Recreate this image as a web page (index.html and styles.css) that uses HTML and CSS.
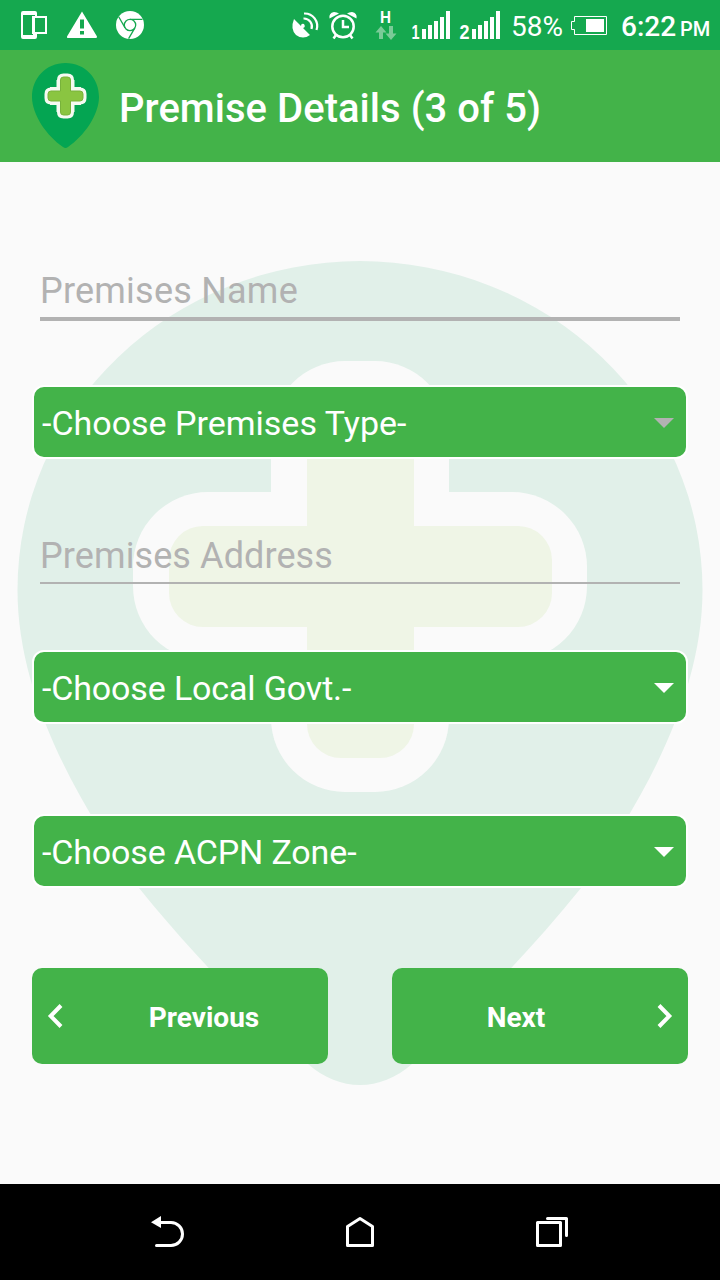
FILE: index.html
```html
<!DOCTYPE html>
<html lang="en">
<head>
<meta charset="utf-8">
<title>Premise Details</title>
<link rel="stylesheet" href="styles.css">
</head>
<body>
<div class="screen">
  <header class="status">
    <svg class="status-left" width="160" height="50" viewBox="0 0 160 50">
      <path fill="#fff" fill-rule="evenodd" d="M23 11H35Q37 11 37 13V16H47V34H37V37Q37 39 35 39H23Q21 39 21 37V13Q21 11 23 11ZM23 15V35H33V34H32V16H35V15ZM35 18V32H45V18Z"/>
      <path fill="#fff" fill-rule="evenodd" d="M82 11.500L97 36.500Q97 38 96 38H68Q66.500 38 67 36.500ZM80 19.500V28.500H84V19.500ZM80 31V34.500H84V31Z"/>
      <circle cx="130" cy="25" r="14" fill="#fff"/>
      <g fill="none" stroke="#15a84f" stroke-width="1.300">
        <circle cx="130" cy="25" r="5.700"/>
        <path d="M130 19.300H142.500M125.100 27.900L118.700 16.800M134.900 27.900L128.600 38.700"/>
      </g>
    </svg>
    <div class="status-right">
      <svg width="232" height="50" viewBox="280 0 232 50">
        <path fill="#fff" d="M294 19L301 26Q301 23 304 24Q306 27 303 28L310 35Q303 40 296 35Q290 29 294 19Z"/>
        <g fill="none" stroke="#fff" stroke-width="2.200">
          <path d="M304 13.500A12.500 12.500 0 0 1 316.500 30M303.500 18.500A8 8 0 0 1 311.500 29"/>
          <circle cx="343" cy="26.500" r="10.700" stroke-width="2.500"/>
          <path d="M343 20V27H349" stroke-width="2.500"/>
          <path d="M336 35L333.500 38.500M350 35L352.500 38.500" stroke-width="2.500"/>
        </g>
        <path fill="#fff" d="M329.500 18.500Q328.500 13 334 12Q337 12 339 13.500ZM356.500 18.500Q357.500 13 352 12Q349 12 347 13.500Z"/>
        <text class="net" x="380" y="23" textLength="11" lengthAdjust="spacingAndGlyphs">H</text>
        <path fill="#7acb98" d="M381 26L386.500 32.500H383V39H379V32.500H375.500ZM391 40L385.500 33.500H389V26H393V33.500H396.500Z"/>
        <text class="sim" x="411.500" y="39" textLength="8" lengthAdjust="spacingAndGlyphs">1</text>
        <text class="sim" x="459.500" y="39" textLength="10" lengthAdjust="spacingAndGlyphs">2</text>
        <path fill="#fff" d="M422 29h4v10h-4zM428 25h4v14h-4zM434 21h4v18h-4zM440 17h4v22h-4zM446 11h4v28h-4zM472 29h4v10h-4zM478 25h4v14h-4zM484 21h4v18h-4zM490 17h4v22h-4zM496 11h4v28h-4z"/>
      </svg>
      <span class="battery-text">58%</span>
      <svg class="battery" width="37" height="20" viewBox="0 0 37 20">
        <path fill="none" stroke="#fff" d="M3.500 .5H35.500V18.500H3.500V13.500H.5V5.500H3.500Z"/>
        <path fill="#fff" d="M15 3H33V16H15Z"/>
      </svg>
      <span class="clock">6:22</span><span class="meridiem">PM</span>
    </div>
  </header>

  <div class="appbar">
    <svg class="logo" width="67" height="86" viewBox="0 0 67 86">
      <path fill="#04a552" d="M33.500 0C53 0 67 15 67 34C67 52 52 73 36 84Q33.500 86 31 84C15 73 0 52 0 34C0 15 14 0 33.500 0Z"/>
      <path fill="none" stroke="#f6faf2" stroke-width="18" stroke-linecap="square" stroke-linejoin="round" d="M33.500 26V40M27 33H40"/>
      <path fill="#8ac541" stroke="#f6faf2" stroke-width="7" stroke-linejoin="round" d="M31.500 14H35.500Q38.500 14 38.500 17V28H48Q51 28 51 31V35Q51 38 48 38H38.500V49Q38.500 52 35.500 52H31.500Q28.500 52 28.500 49V38H19Q16 38 16 35V31Q16 28 19 28H28.500V17Q28.500 14 31.500 14Z"/>
      <path fill="#8ac541" stroke="#78b33b" d="M31.500 14H35.500Q38.500 14 38.500 17V28H48Q51 28 51 31V35Q51 38 48 38H38.500V49Q38.500 52 35.500 52H31.500Q28.500 52 28.500 49V38H19Q16 38 16 35V31Q16 28 19 28H28.500V17Q28.500 14 31.500 14Z"/>
    </svg>
    <h1 class="title">Premise Details (3 of 5)</h1>
  </div>

  <main class="content">
    <svg class="watermark" width="720" height="1022" viewBox="0 162 720 1022">
      <path fill="#e1f0e9" d="M17.500 590A342.500 329 0 0 1 702.500 590C702.500 700 638 808 581 888C527 955 465 1018 412 1064C396 1078 378 1085 360 1085S324 1078 308 1064C255 1018 193 955 139 888C82 808 17.500 700 17.500 590Z"/>
      <g fill="#fafafa"><rect x="271" y="361" width="178" height="431" rx="74"/><rect x="133" y="492" width="454" height="169" rx="75"/></g>
      <path fill="#fafafa" d="M271 440H449V700H271Z"/>
      <g fill="#eff5e6"><rect x="307" y="397" width="107" height="361" rx="34"/><rect x="169" y="526" width="383" height="101" rx="34"/></g>
    </svg>
    <form class="form">
      <div class="field focused">Premises Name</div>
      <div class="select muted"><span>-Choose Premises Type-</span><i class="caret"></i></div>
      <div class="field">Premises Address</div>
      <div class="select local"><span>-Choose Local Govt.-</span><i class="caret"></i></div>
      <div class="select zone"><span>-Choose ACPN Zone-</span><i class="caret"></i></div>
      <div class="actions">
        <button type="button" class="btn">
          <svg width="16" height="24" viewBox="0 0 16 24"><path fill="none" stroke="#fff" stroke-width="4" d="M14 1.500L3.700 12L14 22.500"/></svg>
          <span>Previous</span>
        </button>
        <button type="button" class="btn">
          <span>Next</span>
          <svg width="16" height="24" viewBox="0 0 16 24"><path fill="none" stroke="#fff" stroke-width="4" d="M2 1.500L12.300 12L2 22.500"/></svg>
        </button>
      </div>
    </form>
  </main>

  <nav class="navbar">
    <svg width="34" height="32" viewBox="0 0 34 32"><path fill="#fff" d="M0 6.200L10 0V12Z"/><path fill="none" stroke="#fff" stroke-width="3" stroke-linecap="round" d="M8 6.500H20A11.500 11.500 0 0 1 20 29.500H5.500"/></svg>
    <svg class="home" width="28" height="32" viewBox="0 0 28 32"><path fill="none" stroke="#fff" stroke-width="3" stroke-linejoin="round" d="M1.500 10.500L14 2.500L26.500 10.500V29.500H1.500Z"/></svg>
    <svg width="32" height="32" viewBox="0 0 32 32"><g fill="none" stroke="#fff" stroke-width="3" stroke-linejoin="round" stroke-linecap="round"><path d="M1.500 6.500H24.500V29.500H1.500Z"/><path d="M11.500 2.500H30.500V19.500"/></g></svg>
  </nav>
</div>
</body>
</html>
```
FILE: styles.css
```css
* { box-sizing: border-box; }
body { margin: 0; font-family: Roboto, sans-serif; }
.screen { width: 720px; height: 1280px; display: flex; flex-direction: column; overflow: hidden; background: #fafafa; }
svg { display: block; flex: none; }

.status { height: 50px; display: flex; justify-content: space-between; background: #15a84f; color: #fff; }
.status-right { display: flex; align-items: center; width: 440px; white-space: nowrap; }
.net { font: 700 17px "Liberation Sans", sans-serif; fill: #fff; }
.sim { font: 700 20px "Liberation Sans", sans-serif; fill: #fff; }
.battery-text { width: 60px; margin-left: -1px; font-size: 28px; padding-top: 3px; }
.battery { margin-top: 1px; }
.clock { width: 59px; margin-left: 13px; padding-top: 3px; font-size: 28px; font-weight: 500; }
.meridiem { padding-top: 8px; font-size: 20px; font-weight: 500; }

.appbar { height: 112px; display: flex; align-items: center; gap: 20px; padding-left: 32px; background: #43b349; }
.title { margin: 4px 0 0; font-size: 40px; font-weight: 500; letter-spacing: .04px; color: #fff; white-space: nowrap; }

.content { position: relative; flex: 1; }
.watermark { position: absolute; top: 0; left: 0; }
.form { position: relative; display: flex; flex-direction: column; padding: 95px 32px 0; }
.field { height: 64px; margin: 0 8px; padding-top: 13px; border-bottom: 4px solid #b2b2b2; font-size: 36px; line-height: 42px; color: #b2b2b2; letter-spacing: .1px; }
.focused { letter-spacing: .22px; }
.field:not(.focused) { height: 62px; margin-top: 63px; border-bottom-width: 2px; }
.select { height: 74px; margin-top: 66px; padding: 2px 12px 0 8px; display: flex; align-items: center; justify-content: space-between; border: 2px solid #fff; border-radius: 12px; background: #43b349; color: #fff; font-size: 34px; line-height: 42px; }
.focused + .select { margin-top: 64px; }
.local, .zone { letter-spacing: -.14px; }
.zone { margin-top: 90px; }
.caret { width: 0; border: 10px solid transparent; border-top-color: #fff; border-bottom: 0; }
.muted .caret { border-top-color: #b2b2b2; }
.actions { display: flex; justify-content: space-between; margin-top: 80px; }
.btn { width: 296px; height: 96px; display: flex; align-items: center; padding: 0 15px; border: 0; border-radius: 10px; background: #43b349; color: #fff; font: 700 28px/34px Roboto, sans-serif; }
.btn span { flex: 1; text-align: center; padding: 4px 0 0 32px; }
.btn span:first-child { padding: 4px 32px 0 0; }

.navbar { height: 96px; display: flex; align-items: center; justify-content: space-between; padding: 0 152px 0 151px; background: #000; }
.home { margin-right: 2px; }
```
